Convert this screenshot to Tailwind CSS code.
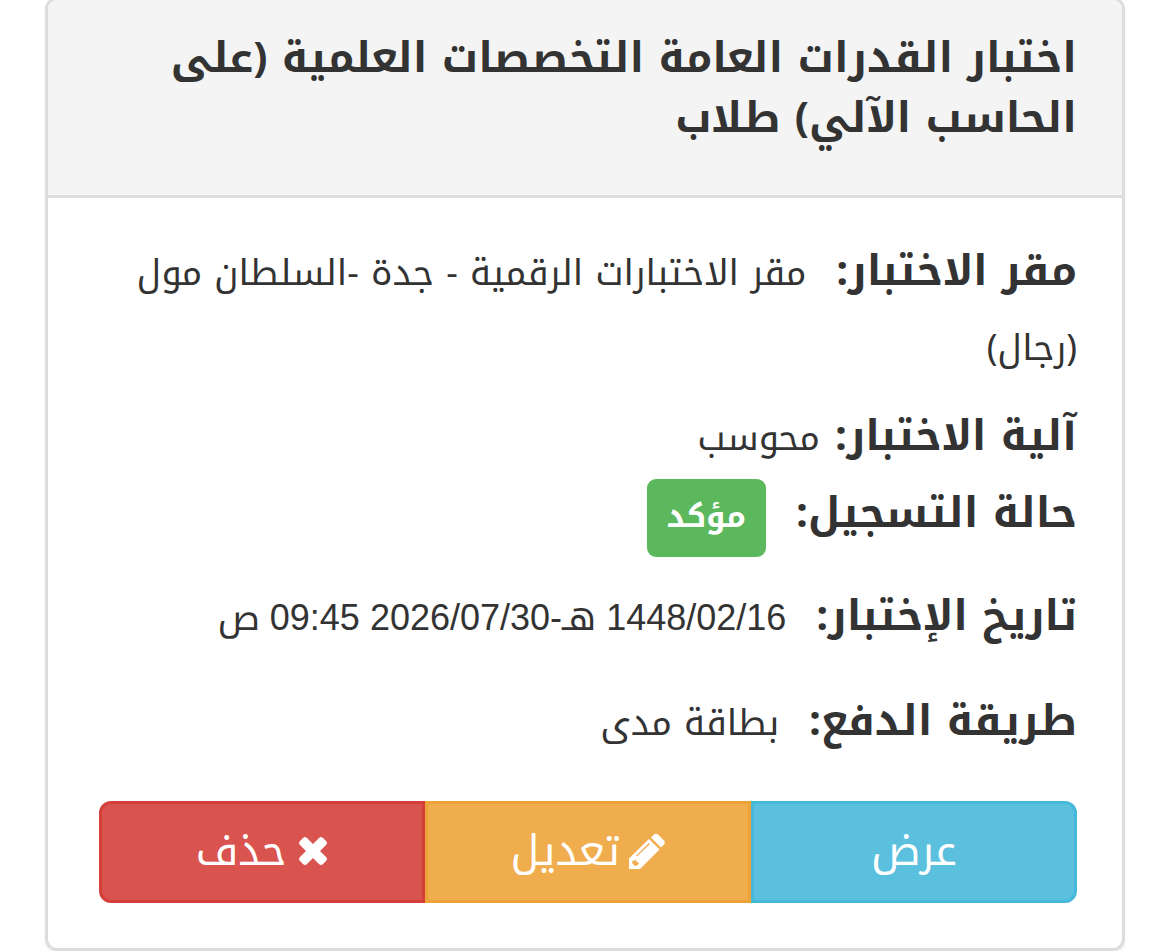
<!DOCTYPE html>
<html lang="ar" dir="rtl">
<head>
<meta charset="utf-8">
<meta name="viewport" content="width=device-width, initial-scale=1">
<title>اختبار القدرات العامة</title>
<script src="https://cdn.jsdelivr.net/npm/@tailwindcss/browser@4"></script>
</head>
<body class="overflow-hidden bg-white px-[45px] font-['Noto_Kufi_Arabic','Liberation_Sans',sans-serif] text-[36px] leading-[75px] text-[#333]">
<main class="-mt-[3px] rounded-xl border-[3px] border-[#ddd] bg-white shadow-[0_3px_3px_rgba(0,0,0,0.05)]">
  <header class="rounded-t-[9px] border-b-[3px] border-[#ddd] bg-[#f4f4f4] px-[45px] pt-[28px] pb-[47px]">
    <h1 class="text-[42px] leading-[60px] font-bold">اختبار القدرات العامة التخصصات العلمية (على الحاسب الآلي) طلاب</h1>
  </header>
  <div class="px-[45px] pt-[36px] pb-[45px]">
    <p><strong class="ml-[30px] text-[42px]">مقر الاختبار:</strong>مقر الاختبارات الرقمية - جدة -السلطان مول (رجال)</p>
    <p class="mt-[13px]"><strong class="ml-[15px] text-[42px]">آلية الاختبار:</strong>محوسب</p>
    <p class="h-[73px]"><strong class="ml-[30px] text-[42px]">حالة التسجيل:</strong><span class="inline-block h-[78px] rounded-[9px] bg-[#5cb85c] px-[20px] text-[31px] leading-[75px] font-bold text-white">مؤكد</span></p>
    <p class="mt-[30px]"><strong class="ml-[30px] text-[42px]">تاريخ الإختبار:</strong><time class="font-['Liberation_Sans','Noto_Kufi_Arabic',sans-serif]">1448/02/16 هـ-2026/07/30 09:45 ص</time></p>
    <p class="mt-[28px]"><strong class="ml-[30px] text-[42px]">طريقة الدفع:</strong>بطاقة مدى</p>
    <div class="mt-[40px] ml-[6px] grid grid-cols-3 text-[42px] leading-[60px] text-white">
      <button type="button" class="flex h-[102px] items-center justify-center rounded-r-xl border-[3px] border-[#46b8da] bg-[#5bc0de] pb-[3px]">عرض</button>
      <button type="button" class="flex h-[102px] items-center justify-center gap-[9px] border-[3px] border-[#eea236] bg-[#f0ad4e] pb-[3px]">
        <svg class="size-[36px]" viewBox="0 0 36 36" fill="currentColor" aria-hidden="true"><path d="M22 4.500L25 1.500Q27 0 29 1.500L35 7.500Q36.500 9.500 35 11.500L32 14.500zM20 6L30.500 16.500 11 36H0V25.500zM20 10L7 22.700 7.800 23.500 21 11zM4 27L3 30 6 33 9 32 10 29.500 7.500 29 7 26.500 5 28z" fill-rule="evenodd"/></svg>
        <span>تعديل</span>
      </button>
      <button type="button" class="flex h-[102px] items-center justify-center gap-[12px] rounded-l-xl border-[3px] border-[#d43f3a] bg-[#d9534f] pb-[3px]">
        <svg class="size-[30px]" viewBox="0 0 30 30" fill="currentColor" aria-hidden="true"><path d="M2 5l3-3q2-2 4 0l6 6 6-6q2-2 4 0l3 3q2 2 0 4l-6 6 6 6q2 2 0 4l-3 3q-2 2-4 0l-6-6-6 6q-2 2-4 0l-3-3q-2-2 0-4l6-6-6-6q-2-2 0-4z"/></svg>
        <span>حذف</span>
      </button>
    </div>
  </div>
</main>
</body>
</html>
